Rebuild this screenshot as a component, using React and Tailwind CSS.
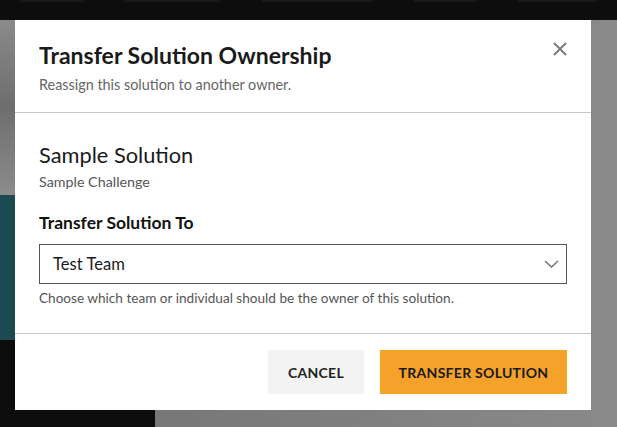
export default function App() {
  return (
    <div className="relative h-[427px] w-full overflow-hidden bg-[#808080] font-['Lato',sans-serif]">
      {/* Dimmed page behind the modal */}
      <div className="flex h-full flex-col">
        <div className="flex h-5 shrink-0 items-start justify-between bg-[#0d0d0d] px-5">
          <div className="h-[2px] w-16 rounded bg-[#1a1a1a]" />
          <div className="h-[2px] w-24 rounded bg-[#1a1a1a]" />
          <div className="h-[2px] w-28 rounded bg-[#1a1a1a]" />
          <div className="h-[2px] w-16 rounded bg-[#1a1a1a]" />
          <div className="h-[2px] w-20 rounded bg-[#1a1a1a]" />
        </div>
        <div className="flex flex-1">
          <div className="flex w-[155px] flex-col">
            <div className="h-[175px] bg-gradient-to-b from-[#8a8a8a] via-[#6e6e6e] to-[#8c8c8c]" />
            <div className="h-[145px] bg-[#1c4a52]" />
            <div className="flex-1 bg-[#0c0c0c]" />
          </div>
          <div className="flex-1 bg-gradient-to-r from-[#777777] to-[#8a8a8a]" />
        </div>
      </div>

      {/* Modal */}
      <div className="absolute left-[15px] top-[20px] w-[576px] bg-white">
        <div className="relative px-6 pt-[21px] pb-[17px]">
          <h2 className="text-[23px] font-bold leading-[28px] text-[#1a1a1a]">Transfer Solution Ownership</h2>
          <p className="mt-[6px] text-[14.4px] leading-5 text-[#666666]">Reassign this solution to another owner.</p>
          <button className="absolute right-6 top-[22px] text-[#777777]">
            <svg width="14" height="14" viewBox="0 0 14 14" fill="none" stroke="currentColor" strokeWidth="1.8">
              <path d="M1 1 13 13M13 1 1 13" />
            </svg>
          </button>
        </div>
        <div className="h-px bg-[#c8c8c8]" />
        <div className="px-6 pt-[29px] pb-[26px]">
          <div className="text-[21.8px] leading-[26px] text-[#1a1a1a]">Sample Solution</div>
          <div className="mt-[4px] text-[14.3px] leading-5 text-[#555555]">Sample Challenge</div>
          <div className="mt-[20px] text-[17.5px] font-bold leading-[22px] text-[#111111]">Transfer Solution To</div>
          <div className="mt-[10px] flex h-10 items-center justify-between border border-[#555555] pl-[13px] pr-[7px]">
            <span className="text-[16.6px] text-[#1a1a1a]">Test Team</span>
            <svg width="15" height="8" viewBox="0 0 15 8" fill="none" stroke="#777777" strokeWidth="1.6">
              <path d="M1 1 7.5 7 14 1" />
            </svg>
          </div>
          <p className="mt-[5px] text-[13.6px] leading-[18px] text-[#555555]">
            Choose which team or individual should be the owner of this solution.
          </p>
        </div>
        <div className="h-px bg-[#c8c8c8]" />
        <div className="flex justify-end gap-4 px-6 pt-4 pb-4">
          <button className="h-11 w-24 bg-[#f3f3f3] text-[14px] font-bold tracking-[0.02em] text-[#222222]">CANCEL</button>
          <button className="h-11 w-[187px] bg-[#f5a22a] text-[14px] font-bold tracking-[0.02em] text-[#1a1a1a]">TRANSFER SOLUTION</button>
        </div>
      </div>
    </div>
  )
}
